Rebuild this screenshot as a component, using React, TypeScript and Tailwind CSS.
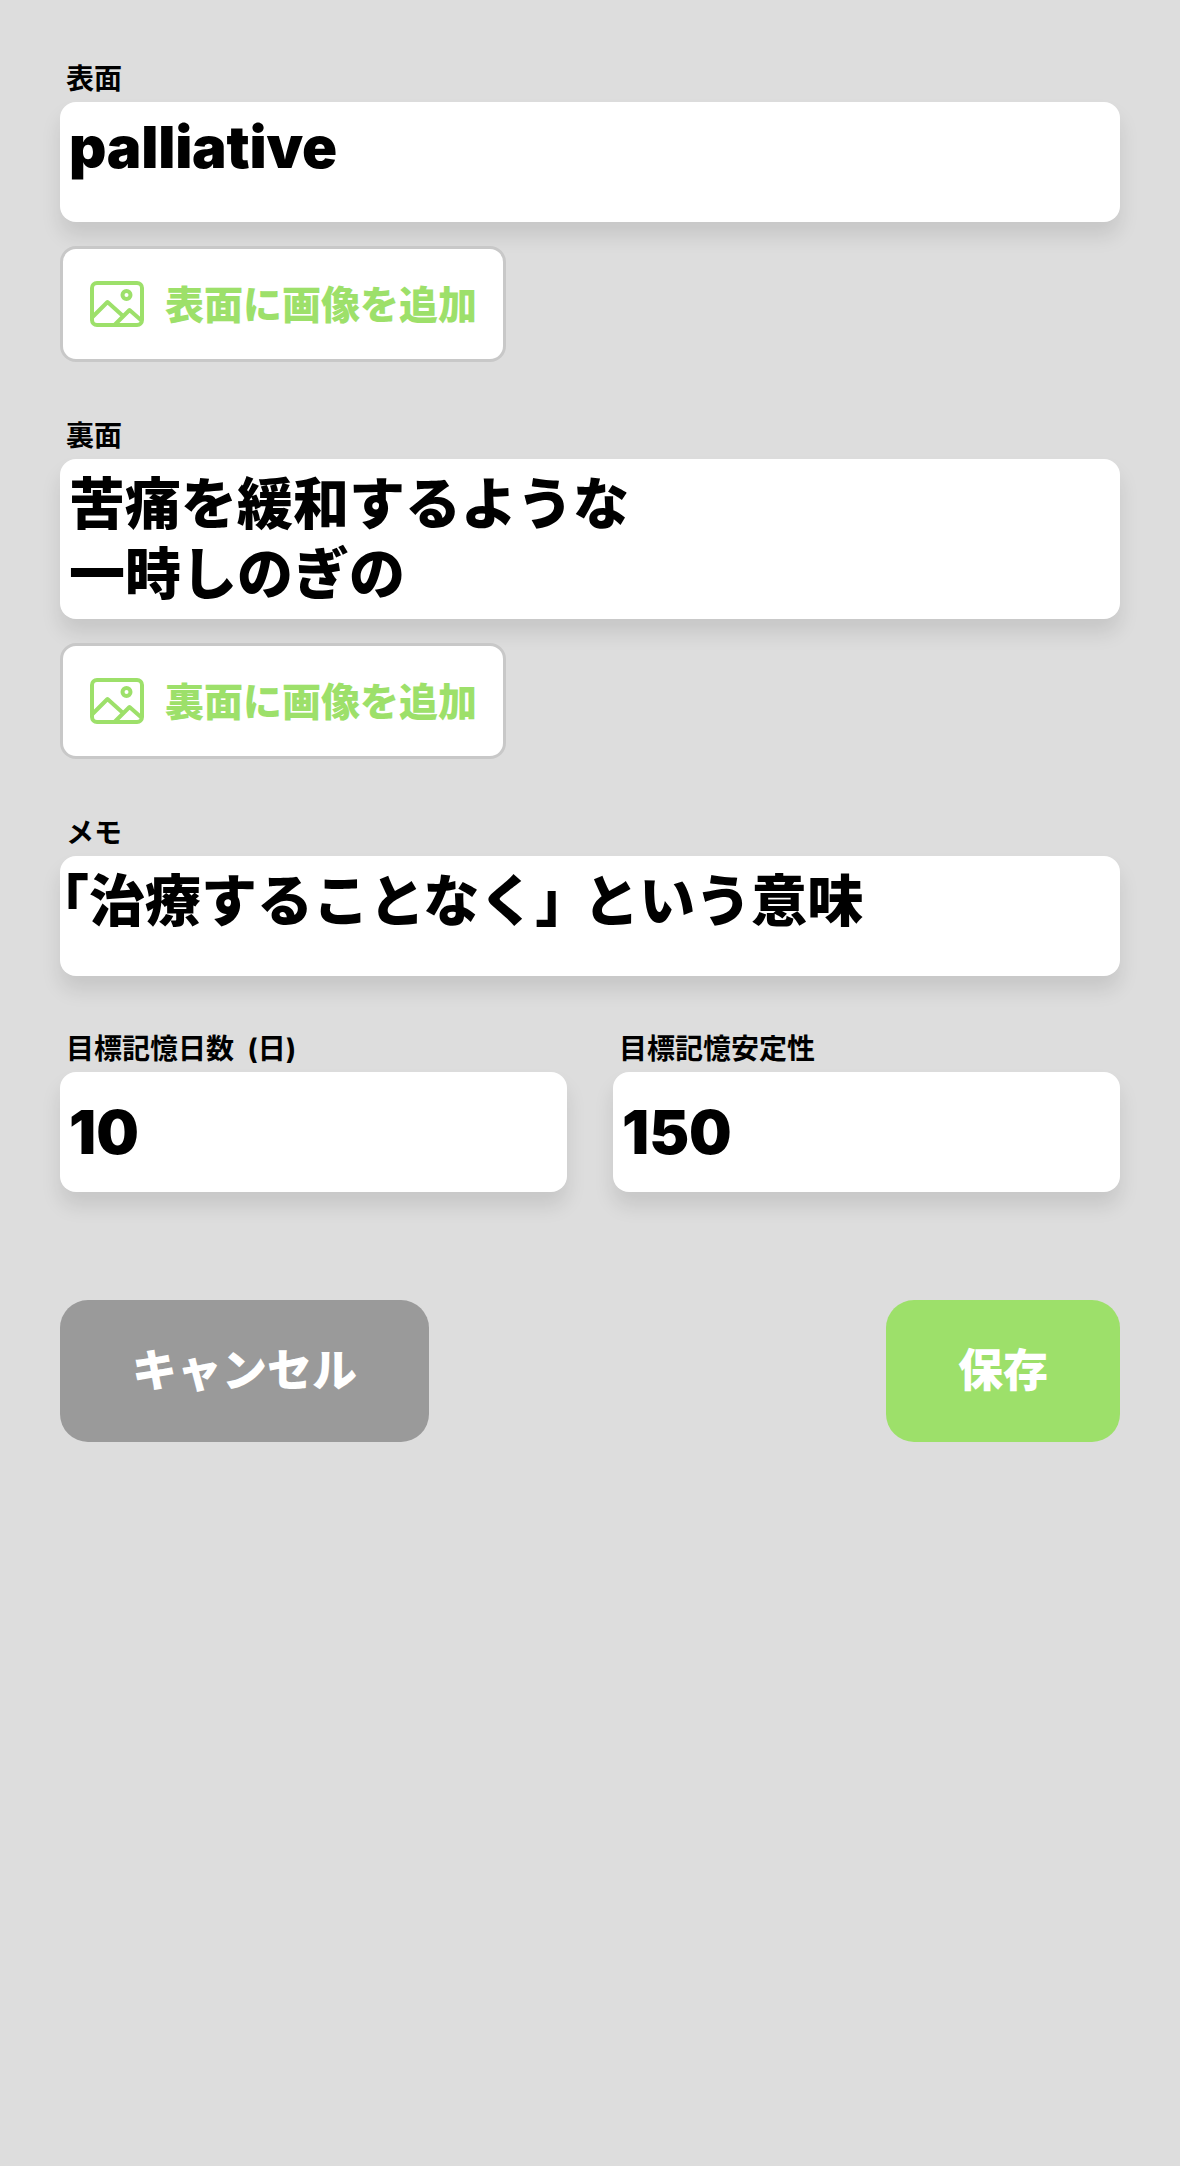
const boxShadow = 'shadow-[0_14px_20px_rgba(0,0,0,0.1)]';

function FieldLabel({ text }: { text: string }) {
  return <div className="h-[46px] pl-[6px] text-[28px] leading-[46px] font-bold whitespace-pre text-black">{text}</div>;
}

function ImageIcon() {
  return (
    <svg width="54" height="46" viewBox="0 0 54 46" fill="none" stroke="#9de06a" strokeWidth="4" strokeLinejoin="round" className="shrink-0">
      <rect x="2" y="2" width="50" height="42" rx="5" />
      <circle cx="36.5" cy="14" r="4" />
      <path d="M2.5 36 L17.5 21 L33 35" />
      <path d="M24.5 44 L39.5 29 L52 40" />
    </svg>
  );
}

function AddImageButton({ label }: { label: string }) {
  return (
    <button className="mt-[24px] flex h-[116px] w-[446px] items-center gap-[21px] rounded-[16px] border-[3px] border-[#c8c8c8] bg-white pl-[27px]">
      <ImageIcon />
      <span className="text-[39px] leading-none font-black whitespace-nowrap text-[#9de06a]">{label}</span>
    </button>
  );
}

export default function App() {
  return (
    <div className="min-h-[2166px] bg-[#dddddd] px-[60px] pt-[56px]" style={{ fontFamily: '"Inter", "Noto Sans CJK JP", sans-serif' }}>
      <FieldLabel text="表面" />
      <div className={`h-[120px] rounded-[16px] bg-white px-[9px] py-[10px] text-[58px] leading-[70px] font-black tracking-[-0.2px] text-black ${boxShadow}`}>
        palliative
      </div>
      <AddImageButton label="表面に画像を追加" />

      <div className="mt-[51px]">
        <FieldLabel text="裏面" />
      </div>
      <div className={`h-[160px] rounded-[16px] bg-white px-[9px] py-[10px] text-[56px] leading-[70px] font-black text-black ${boxShadow}`}>
        苦痛を緩和するような
        <br />
        一時しのぎの
      </div>
      <AddImageButton label="裏面に画像を追加" />

      <div className="mt-[51px]">
        <FieldLabel text="メモ" />
      </div>
      <div className={`h-[120px] rounded-[16px] bg-white px-[9px] py-[10px] text-[56px] leading-[70px] font-black whitespace-nowrap text-black ${boxShadow}`}>
        <span className="-ml-[8px] [font-feature-settings:'halt']">「</span>治療することなく<span className="mr-[20px] [font-feature-settings:'halt']">」</span>という意味
      </div>

      <div className="mt-[50px] grid grid-cols-2 gap-[46px]">
        <div>
          <FieldLabel text="目標記憶日数  (日)" />
          <div className={`flex h-[120px] items-center rounded-[16px] bg-white px-[9px] text-[60px] font-black text-black ${boxShadow}`}>
            10
          </div>
        </div>
        <div>
          <FieldLabel text="目標記憶安定性" />
          <div className={`flex h-[120px] items-center rounded-[16px] bg-white px-[9px] text-[60px] font-black text-black ${boxShadow}`}>
            150
          </div>
        </div>
      </div>

      <div className="mt-[108px] flex justify-between">
        <button className="h-[142px] w-[369px] rounded-[28px] bg-[#9a9a9a] text-[45px] font-black text-white">キャンセル</button>
        <button className="h-[142px] w-[234px] rounded-[28px] bg-[#9de06a] text-[45px] font-black text-white">保存</button>
      </div>
    </div>
  );
}
